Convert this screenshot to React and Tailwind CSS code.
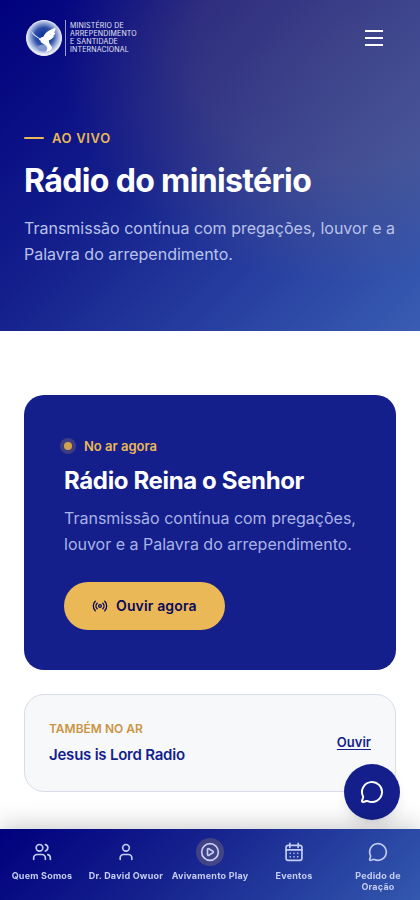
import { CirclePlay, MessageCircle, Radio, User, Users } from 'lucide-react';

const tabs = [
  { label: 'Quem Somos', icon: Users },
  { label: 'Dr. David Owuor', icon: User },
  { label: 'Avivamento Play', icon: CirclePlay, active: true },
  { label: 'Eventos', icon: CalendarIcon },
  { label: 'Pedido de Oração', icon: MessageCircle },
];

function CalendarIcon({ className, strokeWidth }) {
  return (
    <svg
      viewBox="0 0 24 24"
      fill="none"
      stroke="currentColor"
      strokeWidth={strokeWidth}
      strokeLinecap="round"
      strokeLinejoin="round"
      className={className}
      aria-hidden="true"
    >
      <rect x="2.5" y="4" width="19" height="18" rx="2.5" />
      <path d="M7 1.5v5M17 1.5v5M2.5 9.5h19" />
      <path d="M7.5 13.5h.01M12 13.5h.01M16.5 13.5h.01M7.5 17.8h.01M12 17.8h.01M16.5 17.8h.01" />
    </svg>
  );
}

function DoveSeal() {
  return (
    <svg viewBox="0 0 36 36" className="size-9" aria-hidden="true">
      <defs>
        <radialGradient id="seal" cx="50%" cy="46%" r="52%">
          <stop offset="0" stopColor="#0a2a94" />
          <stop offset="0.5" stopColor="#2d4fa9" />
          <stop offset="0.8" stopColor="#a9b8e2" />
          <stop offset="1" stopColor="#f3f5fc" />
        </radialGradient>
      </defs>
      <circle cx="18" cy="18" r="17.5" fill="url(#seal)" stroke="#eef1fb" strokeWidth="1" />
      <ellipse cx="17.500" cy="28" rx="6" ry="3.600" fill="#8298d2" />
      {/* left wing and body */}
      <path
        d="M5.200 11c2.400 3.400 5.600 5.600 9 7.400.8-1.400 2.700-1.900 4.200-1l4.600 1.600c-.6 2.600.3 4.600 2.300 7 1.300 1.500.6 3.400-1 4.500-1.500.8-3 1.100-4.600 1.200 1.600-1.500 2-3.200 1.100-4.900-1-1.600-2.400-2.300-3.900-3.200-1.600-.9-2.300-2-2.700-3.400l-1.500-.1.900-1.200c-3.600-1.600-7-4-8.400-7.900z"
        fill="#fff"
      />
      {/* right wing */}
      <path
        d="M17 18.200c.8-4.600 5.400-8.200 12.600-10.400-.1 2.100-.6 3.600-1.500 4.900.5.100 1.100.1 1.500 0-.6 1.600-1.500 2.700-2.600 3.400h1.100c-1.200 2.400-3 3.600-5.600 4.300z"
        fill="#fff"
      />
    </svg>
  );
}

export default function App() {
  return (
    <div className="min-h-screen bg-white font-['Inter',sans-serif] text-[#141f8c]">
      {/* Hero */}
      <div className="bg-[radial-gradient(ellipse_at_80%_15%,rgba(234,184,86,0.17)_0%,rgba(234,184,86,0.15)_30%,transparent_58%),linear-gradient(135deg,#00007d_0%,#141f8c_40%,#395db2_100%)] pb-16 text-white">
        <header className="flex h-19 items-center justify-between px-6">
          <a href="#inicio" className="flex items-center gap-[3px] pl-0.5">
            <DoveSeal />
            <span className="border-l border-white/60 py-0.5 pl-1 text-[7px] leading-[8px] tracking-wide text-white/90">
              MINISTÉRIO DE
              <br />
              ARREPENDIMENTO
              <br />
              E SANTIDADE
              <br />
              INTERNACIONAL
            </span>
          </a>
          <button type="button" aria-label="Abrir menu" className="flex size-11 flex-col items-center justify-center gap-[5px]">
            <span className="h-0.5 w-[18px] bg-white" />
            <span className="h-0.5 w-[18px] bg-white" />
            <span className="h-0.5 w-[18px] bg-white" />
          </button>
        </header>

        <div className="px-6 pt-13">
          <p className="flex items-center gap-2 text-[13px] leading-5 font-semibold tracking-wider text-[#eab856]">
            <span className="h-0.5 w-5 rounded-full bg-[#eab856]" />
            AO VIVO
          </p>
          <h1 className="mt-[13px] text-[32px] leading-10 font-bold tracking-[-0.02em]">Rádio do ministério</h1>
          <p className="mt-3.5 leading-[26px] text-[#b9c3ea]">
            Transmissão contínua com pregações, louvor e a Palavra do arrependimento.
          </p>
        </div>
      </div>

      <main className="px-6 pt-16 pb-28">
        {/* Live station */}
        <section className="rounded-[20px] bg-[#141f8c] p-10">
          <p className="flex items-center gap-3 text-[13px] leading-[22px] font-semibold text-[#eab856]">
            <span className="size-2 rounded-full bg-[#d5a14f] ring-4 ring-[#eab856]/20" />
            No ar agora
          </p>
          <h2 className="mt-2 text-2xl leading-8 font-bold tracking-[-0.015em] text-white">Rádio Reina o Senhor</h2>
          <p className="mt-2 leading-[26px] text-[#a9b3e6]">
            Transmissão contínua com pregações, louvor e a Palavra do arrependimento.
          </p>
          <button
            type="button"
            className="mt-[25px] flex h-12 items-center gap-2 rounded-full bg-[#eab856] px-7 text-sm font-semibold tracking-[0.01em] text-[#0a0a5c]"
          >
            <Radio className="size-4" />
            Ouvir agora
          </button>
        </section>

        {/* Second station */}
        <section className="mt-6 flex items-center justify-between rounded-[20px] border border-[#d9dde8] bg-[#f6f8fa] p-6">
          <div>
            <p className="text-xs leading-5 font-semibold text-[#cb9443]">TAMBÉM NO AR</p>
            <h3 className="mt-1 text-[15px] leading-6 font-semibold tracking-[-0.015em]">Jesus is Lord Radio</h3>
          </div>
          <a href="#ouvir" className="text-[13px] font-semibold underline underline-offset-2">
            Ouvir
          </a>
        </section>
      </main>

      <button
        type="button"
        aria-label="Abrir conversa"
        className="fixed right-5 bottom-20 flex size-14 items-center justify-center rounded-full bg-[#141f8c] text-white shadow-lg"
      >
        <MessageCircle className="size-6" />
      </button>

      {/* Bottom navigation */}
      <nav className="fixed inset-x-0 bottom-0 grid grid-cols-5 bg-[linear-gradient(135deg,#00007d_0%,#141f8c_40%,#3358ae_100%)] pt-[9px] pb-2 shadow-[0_-4px_24px_rgba(0,0,0,0.2)]">
        {tabs.map(({ label, icon: Icon, active }) => (
          <a key={label} href="#menu" className="flex flex-col items-center gap-1 text-[#c3ccf3]">
            <span className={active ? 'rounded-full bg-[#eab856]/20 p-1' : 'p-1'}>
              <Icon className="size-5" strokeWidth={2} />
            </span>
            <span className="max-w-[78px] text-center text-[9px] leading-[11px] font-bold tracking-wide">{label}</span>
          </a>
        ))}
      </nav>
    </div>
  );
}
